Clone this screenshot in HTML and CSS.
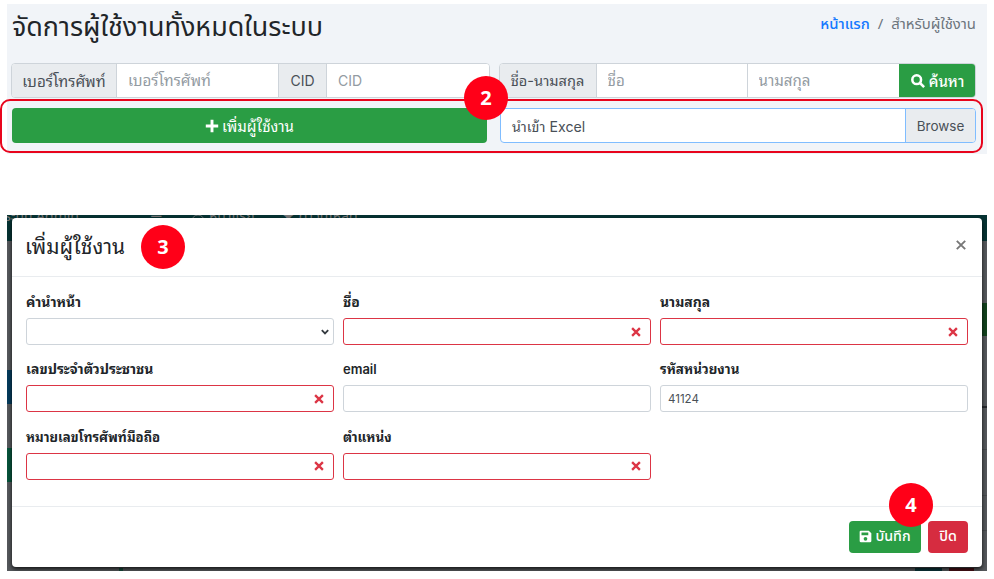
FILE: index.html
```
<!DOCTYPE html>
<html lang="th">
<head>
<meta charset="utf-8">
<title>จัดการผู้ใช้งาน</title>
<link rel="stylesheet" href="styles.css">
</head>
<body>
<section class="users-page">
  <header class="page-head">
    <h1>จัดการผู้ใช้งานทั้งหมดในระบบ</h1>
    <nav class="crumbs"><a href="#">หน้าแรก</a><span class="sep">/</span><span class="here">สำหรับผู้ใช้งาน</span></nav>
  </header>
  <div class="filters">
    <div class="group group-left">
      <label class="addon phone-label">เบอร์โทรศัพท์</label>
      <input class="phone" placeholder="เบอร์โทรศัพท์">
      <label class="addon cid-label latin">CID</label>
      <input class="cid latin" placeholder="CID">
    </div>
    <div class="group group-right">
      <label class="addon name-label">ชื่อ-นามสกุล</label>
      <input class="first" placeholder="ชื่อ">
      <input class="last" placeholder="นามสกุล">
      <button class="search"><svg viewBox="0 0 16 16"><circle cx="6.5" cy="6.5" r="5" /><path d="M10.3 10.3l4.7 4.7"/></svg><span>ค้นหา</span></button>
    </div>
  </div>
  <div class="actions">
    <button class="add"><svg viewBox="0 0 14 14"><path d="M7 .8v12.4M.8 7h12.4"/></svg><span>เพิ่มผู้ใช้งาน</span></button>
    <div class="file"><span class="file-name">นำเข้า Excel</span><span class="browse">Browse</span></div>
    <div class="highlight"></div>
    <span class="badge badge-2">2</span>
  </div>
</section>

<section class="backdrop">
  <div class="under-nav"><span class="brand">ระบบ Admin</span><span class="bars">☰</span><svg class="cloud" viewBox="0 0 16 10"><path d="M1 8a7 7 0 0 1 14 0M4 9a4 4 0 0 1 8 0M7 9a1 1 0 0 1 2 0"/></svg><span class="home">หน้าแรก</span><span class="download">★ ดาวน์โหลด</span></div>
  <div class="under-left"><i class="blue"></i><i class="green"></i></div>
  <div class="under-right"><i class="green"></i><i class="line"></i><i class="rule"></i><i class="rule"></i><i class="rule"></i></div>
  <div class="under-foot"><i class="mark"></i><i class="teal"></i><i class="red"></i></div>
  <div class="modal">
    <header class="modal-head">
      <h2>เพิ่มผู้ใช้งาน</h2><span class="badge badge-3">3</span>
      <svg class="close" viewBox="0 0 10 10"><path d="M.8.8l8.4 8.4M9.2.8L.8 9.2"/></svg>
    </header>
    <form class="fields">
      <div class="field"><label>คำนำหน้า</label><div class="box"><svg class="caret" viewBox="0 0 8 6"><path d="M.8 1.2L4 4.4l3.2-3.2"/></svg></div></div>
      <div class="field"><label>ชื่อ</label><div class="box bad"><svg class="x" viewBox="0 0 9 9"><path d="M1 1l7 7M8 1L1 8"/></svg></div></div>
      <div class="field"><label>นามสกุล</label><div class="box bad"><svg class="x" viewBox="0 0 9 9"><path d="M1 1l7 7M8 1L1 8"/></svg></div></div>
      <div class="field"><label>เลขประจำตัวประชาชน</label><div class="box bad"><svg class="x" viewBox="0 0 9 9"><path d="M1 1l7 7M8 1L1 8"/></svg></div></div>
      <div class="field"><label class="email">email</label><div class="box"></div></div>
      <div class="field"><label class="snug">รหัสหน่วยงาน</label><div class="box"><span class="value">41124</span></div></div>
      <div class="field"><label class="tight">หมายเลขโทรศัพท์มือถือ</label><div class="box bad"><svg class="x" viewBox="0 0 9 9"><path d="M1 1l7 7M8 1L1 8"/></svg></div></div>
      <div class="field"><label class="snug">ตำแหน่ง</label><div class="box bad"><svg class="x" viewBox="0 0 9 9"><path d="M1 1l7 7M8 1L1 8"/></svg></div></div>
    </form>
    <footer class="modal-foot">
      <button class="save"><svg viewBox="0 0 14 14"><path fill-rule="evenodd" d="M2 .7h8.500L13.3 3.500v8.300a1.500 1.500 0 0 1-1.500 1.500H2.200A1.500 1.500 0 0 1 .7 11.800V2A1.300 1.300 0 0 1 2 .7zM2.700 2.600v3h7.300v-3zM7 7.500a2 2 0 1 0 0 4 2 2 0 0 0 0-4z"/></svg>บันทึก<span class="badge badge-4">4</span></button>
      <button class="dismiss">ปิด</button>
    </footer>
  </div>
</section>
</body>
</html>
```
FILE: styles.css
```
* { box-sizing: border-box; }
body { margin: 0; width: 994px; height: 579px; overflow: hidden; background: #fff; color: #212529; font-family: Inter, "Noto Sans Thai Looped", Loma, "Noto Sans Thai", sans-serif; font-size: 15px; }
h1, h2 { margin: 0; font-weight: 400; }
button, input { font: inherit; border: 0; margin: 0; padding: 0; }
a { color: #1479ff; text-decoration: none; }
h1, .crumbs, .modal-foot button, .under-nav { font-family: "Noto Sans Thai", "Noto Sans", sans-serif; }
.users-page { margin: 4px 7px 0; height: 150px; padding: 0 11px 0 5px; background: #f1f4f8; }
.page-head { height: 59px; display: flex; justify-content: space-between; }
h1 { font-size: 26.900px; line-height: 47px; white-space: nowrap; }
.crumbs { display: flex; gap: 8px; line-height: 41px; color: #6c757d; font-size: 14.900px; white-space: nowrap; }
.crumbs a { font-weight: 500; }
.filters { display: flex; gap: 10px; height: 35px; margin-left: -1px; }
.group { display: flex; border: 1px solid #ced4da; border-radius: 4px; overflow: hidden; background: #fff; }
.group-left { width: 479px; }
.group-right { width: 478px; margin-left: -1px; }
.addon { background: #e9ecef; color: #495057; border-right: 1px solid #ced4da; display: flex; align-items: center; justify-content: center; white-space: nowrap; font-size: 15.200px; padding-bottom: 2px; }
.phone-label { width: 105px; }
.phone { width: 162px; border-right: 1px solid #ced4da !important; }
.cid-label { width: 48px; }
.cid { flex: 1; }
.addon.name-label { width: 97px; font-size: 14.600px; }
.group input { min-width: 0; padding-left: 11px; font-size: 15.100px; }
.group input.latin, .addon.latin { font-size: 14px; padding-bottom: 0; }
.group input::placeholder { color: #939ba2; opacity: 1; }
.first { width: 151px; border-right: 1px solid #ced4da !important; }
.last { flex: 1; }
button { color: #fff; background: #2a9d44; display: flex; align-items: center; justify-content: center; white-space: nowrap; }
.search { width: 77px; gap: 4px; margin: -1px; font-size: 15px; }
.search span { padding-bottom: 2px; font-weight: 500; }
.add span { padding-bottom: 1px; }
button svg { width: 14px; height: 14px; flex: none; }
.search svg, .add svg { fill: none; stroke: #fff; stroke-width: 2.900; }
.actions { position: relative; display: flex; gap: 13px; margin-top: 10px; height: 35px; }
.add { width: 475px; gap: 3px; border-radius: 4px; }
.file { width: 476px; display: flex; border: 1px solid #80bdff; border-radius: 4px; background: #fff; overflow: hidden; color: #495057; line-height: 35px; font-size: 14.200px; }
.file-name { flex: 1; padding-left: 11px; }
.browse { width: 70px; text-align: center; background: #e9ecef; border-left: 1px solid #80bdff; font-size: 13.500px; }
.highlight { position: absolute; left: -12px; top: -9px; width: 983px; height: 54px; border: 2px solid #e8041c; border-radius: 10px; }
.badge { width: 44px; height: 44px; border-radius: 50%; background: #ff0018; color: #fff; font: 700 20px/44px "Noto Sans", sans-serif; text-align: center; }
.badge-2 { position: absolute; left: 452px; top: -32px; }
.backdrop { position: relative; margin: 61px 7px 0; height: 356px; background: #55585c; padding: 3px 5px; overflow: hidden; }
.under-nav { position: absolute; left: 0; top: 0; width: 100%; height: 26px; background: #063333; color: #777; }
.under-nav span { position: absolute; top: -7px; font-size: 14px; line-height: 18px; white-space: nowrap; }
.under-nav .brand { left: -3px; }
.under-nav .bars { left: 143px; }
.under-nav .home { left: 202px; }
.under-nav .download { left: 275px; }
.cloud { position: absolute; left: 184px; top: -1px; width: 14px; height: 9px; fill: none; stroke: #777; }
.under-left i, .under-right i, .under-foot i { position: absolute; }
.under-left .blue { left: 0; top: 155px; width: 6px; height: 34px; background: #053b5c; }
.under-left .green { left: 0; top: 233px; width: 6px; height: 34px; background: #07533b; }
.under-right .green { right: 0; top: 88px; width: 6px; height: 33px; background: #12421d; }
.under-right .line { right: 0; top: 191px; width: 6px; height: 2px; background: #26292d; }
.under-right .rule { right: 0; top: 234px; width: 6px; height: 1px; background: #484b4e; }
.under-right .rule:nth-child(4) { top: 280px; }
.under-right .rule:nth-child(5) { top: 315px; }
.under-foot i { bottom: 0; height: 3px; }
.under-foot .mark { left: 112px; width: 4px; background: #174a3b; }
.under-foot .teal { left: 908px; width: 27px; background: #0b3439; }
.under-foot .red { left: 942px; width: 25px; background: #481016; }
.modal { position: relative; height: 349px; width: 970px; background: #fff; border-radius: 4px; box-shadow: 0 2px 4px rgba(0, 0, 0, .8); }
.modal-head { height: 59px; display: flex; align-items: center; padding: 0 16px 0 13px; border-bottom: 1px solid #e9ecef; }
h2 { font-size: 20.900px; line-height: 30px; width: 116px; white-space: nowrap; }
.close { width: 10px; height: 10px; margin: 0 0 4px auto; fill: none; stroke: #777; stroke-width: 1.900; }
.fields { height: 230px; padding: 15px 14px 0; display: grid; grid-template-columns: repeat(3, 308px); grid-auto-rows: 67.400px; column-gap: 9px; align-content: start; border-bottom: 1px solid #e9ecef; }
.field label { display: block; height: 26px; line-height: 20px; font-size: 13.900px; font-weight: 700; white-space: nowrap; }
.field .email { font-size: 13px; font-weight: 600; }
.field .snug { font-size: 13.400px; }
.field .tight { font-size: 13.200px; }
.box { height: 27px; border: 1px solid #ced4da; border-radius: 3px; display: flex; align-items: center; }
.bad { border-color: #dc3545; }
.x { width: 10px; height: 10px; margin-left: auto; margin-right: 9px; fill: none; stroke: #dc3545; stroke-width: 2.100; }
.caret { width: 8px; height: 6px; margin-left: auto; margin-right: 4px; fill: none; stroke: #343a40; stroke-width: 1.800; }
.value { margin-left: 7px; font-size: 11.500px; color: #495057; }
.modal-foot { display: flex; justify-content: flex-end; padding: 14px 14px 0; gap: 7px; }
.modal-foot button { height: 32px; border-radius: 4px; font-size: 14.300px; font-weight: 500; padding-bottom: 2px; }
.save { position: relative; width: 72px; gap: 3px; }
.modal-foot .save svg { width: 13px; height: 13px; fill: #fff; }
.modal-foot .dismiss { width: 40px; background: #d62c40; }
.badge-4 { position: absolute; left: 40px; top: -38px; }
```
